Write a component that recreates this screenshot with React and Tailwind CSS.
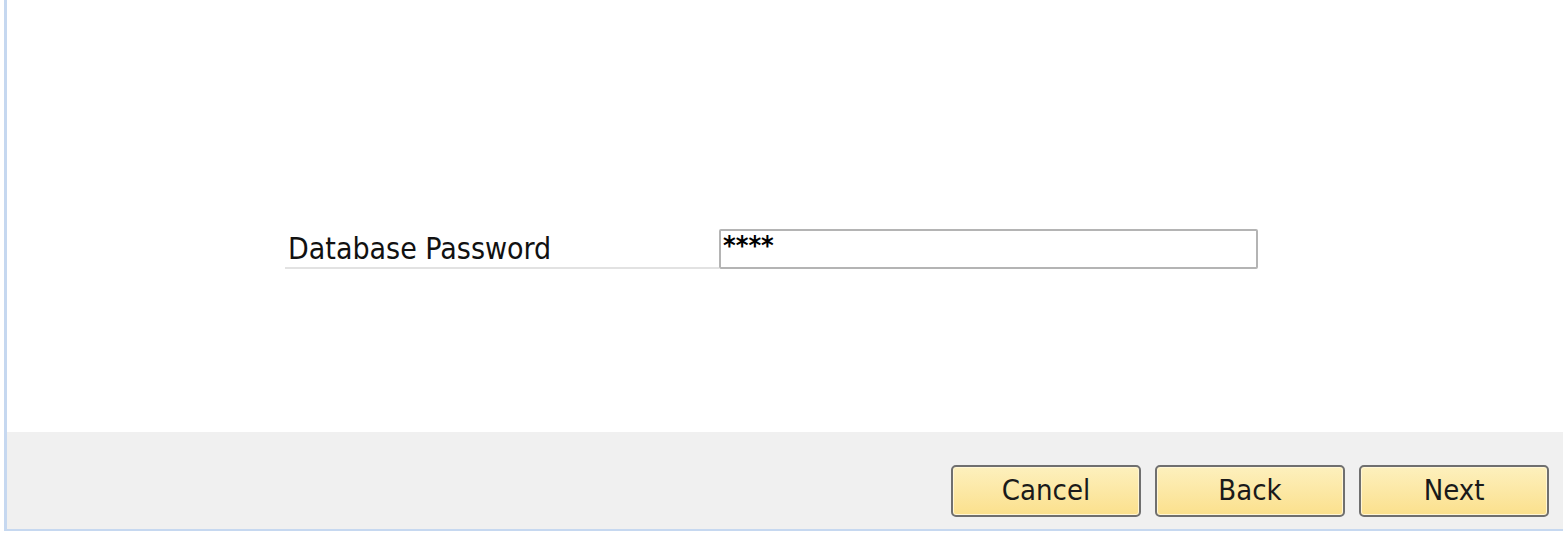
const WizardButton = ({ children }) => (
  <button
    type="button"
    className="h-[52px] w-[190px] rounded-[5px] border-2 border-[#6f6f6f] bg-gradient-to-b from-[#fdf0bd] to-[#fbe08c] pb-[2px] text-[29px] leading-none text-[#1a1a1a] shadow-[inset_0_0_0_1px_#fff6d6]"
  >
    {children}
  </button>
);

export default function App() {
  return (
    <div className="h-[534px] w-[1563px] bg-white font-['DejaVu_Sans_Condensed','DejaVu_Sans',sans-serif]">
      <div className="ml-[4px] flex h-[531px] flex-col border-b-[2px] border-l-[3px] border-[#c6d8f0]">
        <div className="flex h-[432px] shrink-0 items-start pl-[278px] pt-[229px]">
          <div className="flex items-end">
            <div className="flex h-[38px] w-[434px] items-end border-b-2 border-[#e2e2e2] pb-[1px] pl-[3px] text-[30px] leading-[34px] text-[#111]">
              Database Password
            </div>
            <div className="h-[40px] w-[539px] rounded-[2px] border-2 border-[#b4b4b4] bg-white pl-[2px] pt-[2px] text-[27px] font-bold leading-[26px] text-black">
              ****
            </div>
          </div>
        </div>
        <div className="flex flex-1 items-end justify-end gap-[14px] bg-[#f0f0f0] pb-[12px] pr-[14px]">
          <WizardButton>Cancel</WizardButton>
          <WizardButton>Back</WizardButton>
          <WizardButton>Next</WizardButton>
        </div>
      </div>
    </div>
  );
}
